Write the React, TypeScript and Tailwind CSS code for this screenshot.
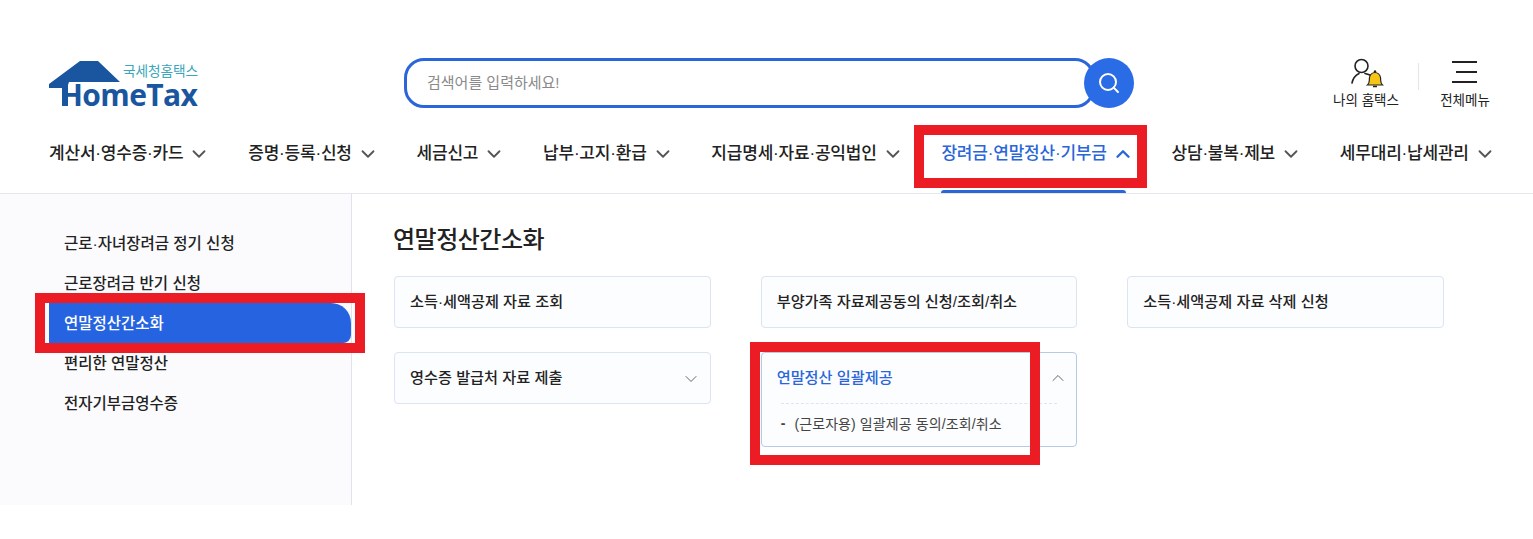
import type { JSX } from "react";
import { ChevronDown, ChevronUp, Search } from "lucide-react";

const NAV_ITEMS = [
  "계산서·영수증·카드",
  "증명·등록·신청",
  "세금신고",
  "납부·고지·환급",
  "지급명세·자료·공익법인",
  "장려금·연말정산·기부금",
  "상담·불복·제보",
  "세무대리·납세관리",
];

const SIDE_ITEMS = [
  "근로·자녀장려금 정기 신청",
  "근로장려금 반기 신청",
  "연말정산간소화",
  "편리한 연말정산",
  "전자기부금영수증",
];

const ACTIVE_NAV = "장려금·연말정산·기부금";
const ACTIVE_SIDE = "연말정산간소화";

function Logo(): JSX.Element {
  return (
    <div className="relative -mt-[1px] h-[50px] w-[150px]">
      <svg className="absolute left-0 top-0" width="150" height="50" viewBox="0 0 150 50">
        <path d="M0 27 L31 4 L49 4 L71 25 L20 25 L19 28 L19 49 L13 49 L13 31 L0 31 Z" fill="#1a56a0" />
      </svg>
      <span className="absolute left-[74px] top-[7px] whitespace-nowrap text-[13.7px] leading-4 tracking-[-0.1px] text-[#3aa6bb]">국세청홈택스</span>
      <span className="absolute left-[11px] top-[22.5px] font-['Open_Sans',sans-serif] text-[30px] font-bold leading-[30px] tracking-[-0.6px] text-[#1a56a0]">HomeTax</span>
    </div>
  );
}

function UserBellIcon(): JSX.Element {
  return (
    <svg width="36" height="30" viewBox="0 0 36 30" fill="none">
      <circle cx="13.500" cy="8" r="6.500" stroke="#222" strokeWidth="1.600" />
      <path d="M4 25 C5 20 8 17 11 15.500 M17 15.500 C19 16 21 16.500 23 17.500" stroke="#222" strokeWidth="1.600" strokeLinecap="round" />
      <path d="M19.500 27 C22 25 21 23 21.500 19.500 C22 16.500 24.500 14.500 27 14.500 C29.500 14.500 32 16.500 32.500 19.500 C33 23 32 25 34.500 27 Z" fill="#f5c518" stroke="#222" strokeWidth="1.200" />
      <path d="M25 28.500 H29" stroke="#222" strokeWidth="1.500" />
      <circle cx="27" cy="13.500" r="1.200" fill="#222" />
    </svg>
  );
}

function Header(): JSX.Element {
  return (
    <header className="h-[194px] border-b border-[#e4e7ec]">
      <div className="flex h-[126px] items-start pl-[49px] pt-[58px]">
        <Logo />
        <div className="ml-[205px] flex w-[730px]">
          <div className="flex h-[50px] w-[691px] items-center rounded-[20px] border-[3px] border-[#2a66d9] pl-[20px] pt-[1px] text-[15px] text-[#8a8a8a]">
            검색어를 입력하세요!
          </div>
          <button className="-ml-[11px] flex h-[50px] w-[50px] shrink-0 items-center justify-center rounded-full bg-[#2a6be6] text-white">
            <Search className="h-6 w-6" strokeWidth={2} />
          </button>
        </div>
        <div className="ml-[202px] flex w-[60px] flex-col items-center">
          <div className="h-[33px]"><UserBellIcon /></div>
          <span className="mt-[1px] whitespace-nowrap text-[13.5px] leading-[18px] text-[#222]">나의 홈택스</span>
        </div>
        <div className="ml-[22px] mt-[5px] h-[27px] w-px bg-[#e2e4e8]" />
        <div className="ml-[21px] flex w-[50px] flex-col items-center">
          <div className="-ml-[2px] flex h-[33px] w-[25px] flex-col justify-between pt-[3px] pb-[8px]">
            <div className="h-[2px] w-full bg-[#222]" />
            <div className="ml-[4px] h-[2px] w-[21px] bg-[#222]" />
            <div className="h-[2px] w-full bg-[#222]" />
          </div>
          <span className="mt-[1px] whitespace-nowrap text-[13.5px] leading-[18px] text-[#222]">전체메뉴</span>
        </div>
      </div>
      <nav className="flex h-[67px] gap-[37.75px] pl-[49px]">
        {NAV_ITEMS.map((item) => {
          const active = item === ACTIVE_NAV;
          return (
            <div key={item} className="relative flex h-[55px] items-center gap-[5px] whitespace-nowrap">
              <span className={`text-[17px] font-medium tracking-[-0.2px] ${active ? "text-[#2a66d9]" : "text-[#222]"}`}>{item}</span>
              {active ? (
                <ChevronUp className="h-[22px] w-[22px] text-[#2a66d9]" strokeWidth={2.6} />
              ) : (
                <ChevronDown className="h-[22px] w-[22px] text-[#555]" strokeWidth={2} />
              )}
              {active && <div className="absolute bottom-[-12px] left-0 right-[8px] h-[3px] rounded-t-sm bg-[#2a66d9]" />}
            </div>
          );
        })}
      </nav>
    </header>
  );
}

function Sidebar(): JSX.Element {
  return (
    <aside className="w-[352px] shrink-0 border-r border-[#dfe4ec] bg-[#fbfbfe] pl-[49px] pt-[29px]">
      {SIDE_ITEMS.map((item) => {
        const active = item === ACTIVE_SIDE;
        return (
          <div
            key={item}
            className={`flex h-[40px] items-center pl-[15px] pt-[1px] text-[15.5px] font-medium ${active ? "rounded-tr-[20px] rounded-br-[8px] bg-[#2563e0] font-bold text-white" : "text-[#222]"}`}
          >
            {item}
          </div>
        );
      })}
    </aside>
  );
}

function Card({ label, chevron }: { label: string; chevron?: boolean }): JSX.Element {
  return (
    <div className="flex h-[52px] items-center justify-between rounded border border-[#dbe4f0] bg-[#fcfdff] pl-[15px] pr-[9px] text-[15.2px] font-medium text-[#222]">
      <span>{label}</span>
      {chevron && <ChevronDown className="mt-[2px] h-[20px] w-[20px] text-[#666]" strokeWidth={1.2} />}
    </div>
  );
}

function ExpandedCard(): JSX.Element {
  return (
    <div className="h-[95px] rounded border border-[#b8c9e6] bg-[#fcfdff]">
      <div className="flex h-[50px] items-center justify-between pl-[15px] pr-[8px] text-[15.2px] font-medium text-[#2a66d9]">
        <span>연말정산 일괄제공</span>
        <ChevronUp className="h-[20px] w-[20px] text-[#666]" strokeWidth={1.2} />
      </div>
      <div className="mx-[19px] flex h-[42px] items-center gap-[9px] border-t border-dashed border-[#dbe4f0] text-[14px] tracking-[0.1px] text-[#444]">
        <span className="-mt-[3px] font-bold">-</span>
        <span>(근로자용) 일괄제공 동의/조회/취소</span>
      </div>
    </div>
  );
}

function Highlight({ className }: { className: string }): JSX.Element {
  return <div className={`pointer-events-none absolute border-[10px] border-[#ec1c24] ${className}`} />;
}

export default function App(): JSX.Element {
  return (
    <div className="relative h-[539px] w-[1533px] overflow-hidden bg-white font-['Liberation_Sans','Noto_Sans_CJK_KR',sans-serif]">
      <Header />
      <div className="flex h-[311px]">
        <Sidebar />
        <main className="flex-1 pl-[41px] pt-[28px]">
          <h2 className="text-[24px] font-medium leading-9 tracking-[-0.5px] text-[#222]">연말정산간소화</h2>
          <div className="ml-[1px] mt-[18px] grid w-[1050px] grid-cols-3 items-start gap-x-[50px] gap-y-[24px]">
            <Card label="소득·세액공제 자료 조회" />
            <Card label="부양가족 자료제공동의 신청/조회/취소" />
            <Card label="소득·세액공제 자료 삭제 신청" />
            <Card label="영수증 발급처 자료 제출" chevron />
            <ExpandedCard />
          </div>
        </main>
      </div>
      <Highlight className="left-[914px] top-[125px] h-[63px] w-[233px]" />
      <Highlight className="left-[35px] top-[293px] h-[60px] w-[330px]" />
      <Highlight className="left-[750px] top-[342px] h-[123px] w-[290px]" />
    </div>
  );
}
